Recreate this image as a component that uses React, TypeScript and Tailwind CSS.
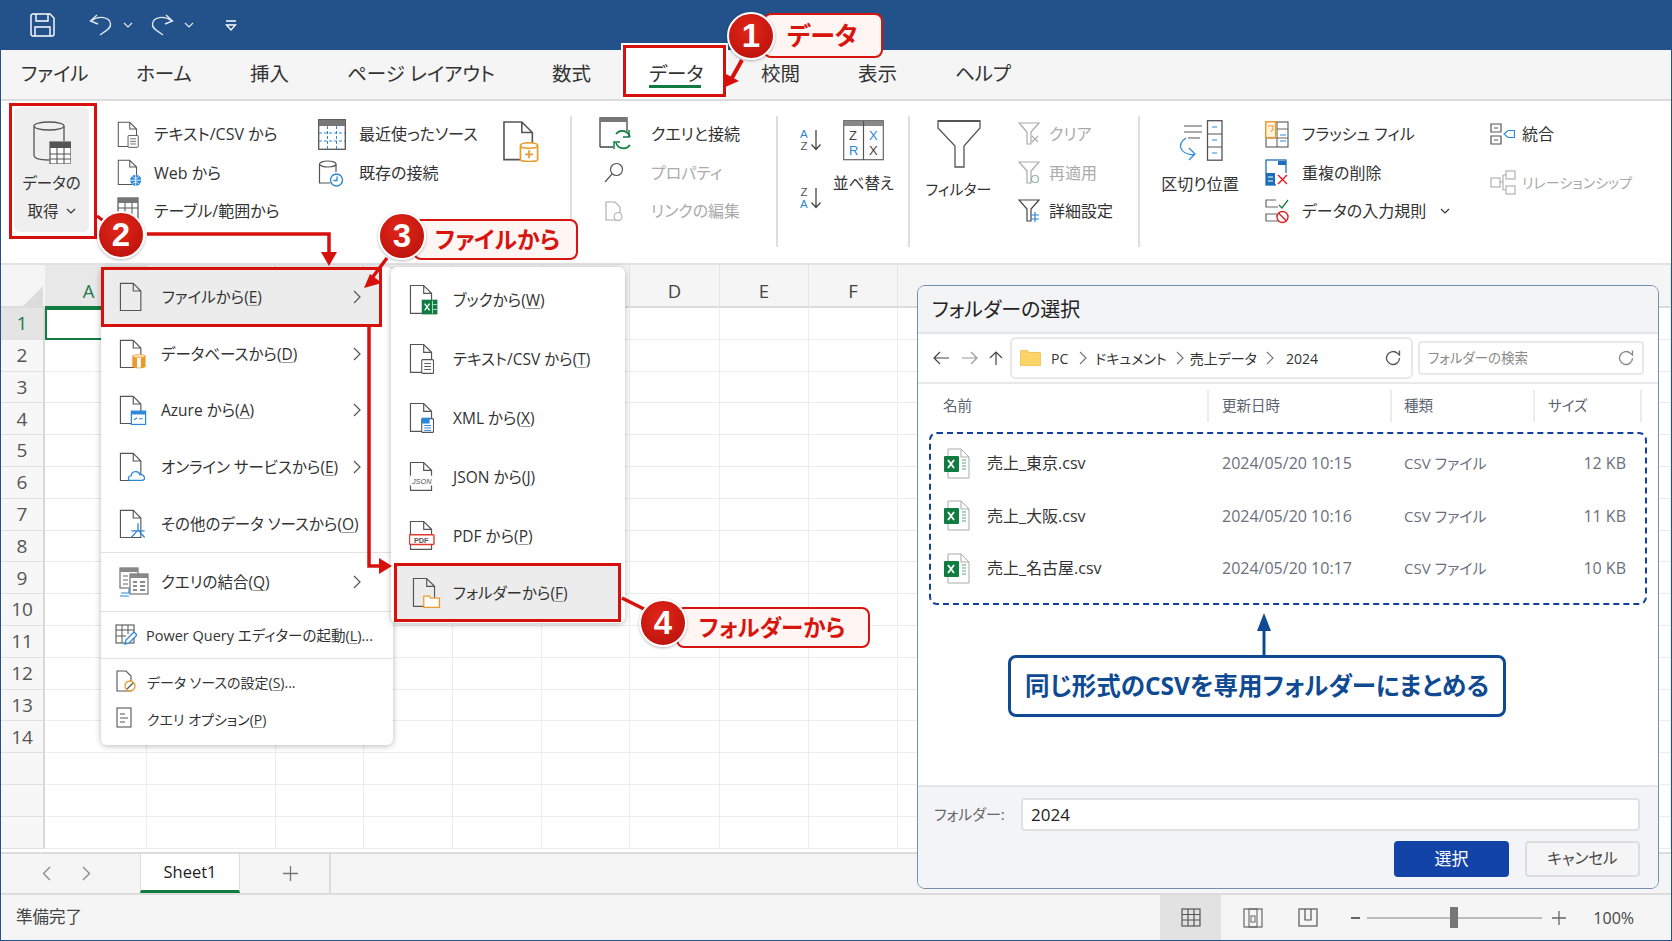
import React from "react";

const S = "#555";
const B = "#2b88d8";
const O = "#eb9b2d";
const G = "#107c41";

function Doc({ s = 1, c = S, children }: { s?: number; c?: string; children?: React.ReactNode }) {
  return (
    <svg width={30 * s} height={32 * s} viewBox="0 0 30 32" fill="none" className="shrink-0">
      <path d="M1.5 1.5H15L23 9.5V30H1.5Z M15 1.5V9.5H23" stroke={c} strokeWidth="1.2" fill="#fff" fillOpacity="0" />
      {children}
    </svg>
  );
}
const TextOv = ({ c = S }: { c?: string }) => (
  <g>
    <rect x="13" y="17" width="12" height="14" rx="1" fill="#fff" stroke={c} strokeWidth="1.1" />
    <path d="M15.5 21h7M15.5 24h7M15.5 27h7" stroke={c} strokeWidth="1" />
  </g>
);
const WebOv = () => (
  <g>
    <circle cx="22" cy="25" r="6.5" fill={B} />
    <path d="M15.5 25h13M22 18.5v13M18 20.5c3 3 5 3 8 0M18 29.5c3-3 5-3 8 0" stroke="#fff" strokeWidth="1" fill="none" />
  </g>
);
const DbOv = () => (
  <g>
    <path d="M14 19.5C14 16.5 27 16.5 27 19.5V30C27 32 14 32 14 30Z" fill="#fff" stroke={O} strokeWidth="1.3" />
    <path d="M14 19.5C14 22 27 22 27 19.5" stroke={O} strokeWidth="1.2" fill="none" />
    <path d="M20.5 23v6M17.5 26h6" stroke={O} strokeWidth="1.3" />
  </g>
);
const DbFill = () => (
  <g>
    <path d="M14 18C14 15.5 28 15.5 28 18V29C28 31.5 14 31.5 14 29Z" fill={O} />
    <rect x="19" y="20" width="4" height="10" fill="#fff" />
    <ellipse cx="21" cy="18" rx="6" ry="1.6" fill="#fbdca8" />
  </g>
);
const AzureOv = () => (
  <g>
    <rect x="13" y="17" width="15" height="14" fill="#fff" stroke={B} strokeWidth="1.3" />
    <rect x="13" y="17" width="15" height="3.5" fill={B} />
    <path d="M16 26l3-2M21 25h4" stroke={B} strokeWidth="1.2" />
  </g>
);
const CloudOv = () => (
  <path d="M12 30c-3 0-3-5 1-5 0-5 8-6 9-1 5-1 7 6 2 6Z" fill="#fff" stroke={B} strokeWidth="1.3" />
);
const OtherOv = () => <path d="M20 15v7M13 30l7-8 7 8M13 23h14" stroke={B} strokeWidth="1.4" fill="none" />;
const XlOv = () => (
  <g>
    <rect x="13" y="16" width="16" height="15" fill={G} />
    <path d="M16 20l5 7M21 20l-5 7" stroke="#fff" strokeWidth="1.4" />
    <path d="M24 17v13M24 21h5M24 26h5" stroke="#bfe3cf" strokeWidth="0.9" />
  </g>
);
const XmlOv = () => (
  <g>
    <rect x="13" y="17" width="12" height="14" rx="1" fill="#fff" stroke={S} strokeWidth="1.1" />
    <rect x="13" y="16" width="8" height="6" fill={B} />
    <path d="M15.5 24h7M15.5 26.5h7M15.5 29h7" stroke={B} strokeWidth="1" />
  </g>
);
const JsonOv = () => (
  <g>
    <rect x="1" y="15" width="24" height="10" fill="#fff" />
    <text x="3" y="23" fontSize="7.5" fill="#555" fontFamily="Liberation Sans, sans-serif" fontStyle="italic">JSON</text>
  </g>
);
const PdfOv = () => (
  <g>
    <rect x="0.5" y="15" width="25" height="10" rx="1" fill="#fff" stroke="#e03a30" strokeWidth="1.4" />
    <text x="5" y="23" fontSize="7.5" fill="#555" fontWeight="700" fontFamily="Liberation Sans, sans-serif">PDF</text>
  </g>
);
const FolderOv = () => (
  <path d="M12 19.5h6l1 2h9V31H12Z" fill="#fff" stroke={O} strokeWidth="1.3" />
);

function Chev({ className = "" }: { className?: string }) {
  return (
    <svg width="10" height="6" viewBox="0 0 10 6" fill="none" className={className}>
      <path d="M1 1l4 4 4-4" stroke="currentColor" strokeWidth="1.2" />
    </svg>
  );
}
function Right({ c = "#555" }: { c?: string }) {
  return (
    <svg width="8" height="14" viewBox="0 0 8 14" fill="none">
      <path d="M1 1l6 6-6 6" stroke={c} strokeWidth="1.2" />
    </svg>
  );
}
function Refresh({ c = "#555" }: { c?: string }) {
  return (
    <svg width="18" height="18" viewBox="0 0 18 18" fill="none">
      <path d="M15.5 9a6.5 6.5 0 1 1-2-4.7L15.5 6V1.5" stroke={c} strokeWidth="1.3" />
    </svg>
  );
}

function GetDataIcon() {
  return (
    <svg width="38" height="43" viewBox="0 0 38 43" fill="none">
      <path d="M1 5V34C1 38 8 39 16 39" stroke={S} strokeWidth="1.3" />
      <path d="M31 5V20" stroke={S} strokeWidth="1.3" />
      <ellipse cx="16" cy="5" rx="15" ry="4" stroke={S} strokeWidth="1.3" fill="#f0f0f0" />
      <rect x="17" y="21" width="21" height="22" fill="#fff" stroke={S} strokeWidth="1.2" />
      <rect x="17" y="21" width="21" height="6" fill={S} />
      <path d="M24 27v16M31 27v16M17 33h21M17 38h21" stroke={S} strokeWidth="1.1" />
    </svg>
  );
}
function SmallTable() {
  return (
    <svg width="26" height="28" viewBox="0 0 26 28" fill="none">
      <rect x="1" y="1" width="20" height="24" stroke={S} strokeWidth="1.2" />
      <rect x="1" y="1" width="20" height="5" fill="#777" />
      <path d="M1 11h20M8 6v19M15 6v19" stroke={S} strokeWidth="1" />
    </svg>
  );
}
function RecentIcon() {
  return (
    <svg width="28" height="31" viewBox="0 0 28 31" fill="none">
      <rect x="0.7" y="0.7" width="26.6" height="29.6" stroke={S} strokeWidth="1.3" fill="#fff" />
      <rect x="1" y="1" width="26" height="6" fill="#777" />
      <path d="M1 14h26M1 22h26" stroke={B} strokeWidth="1" strokeDasharray="3 2" />
      <path d="M9.5 7v23M18.5 7v23" stroke={B} strokeWidth="1" strokeDasharray="3 2" />
    </svg>
  );
}
function ExistingIcon() {
  return (
    <svg width="26" height="28" viewBox="0 0 26 28" fill="none">
      <path d="M1.5 5V24H12M18 5V13" stroke={S} strokeWidth="1.2" />
      <ellipse cx="9.75" cy="5" rx="8.25" ry="3" stroke={S} strokeWidth="1.2" />
      <circle cx="18.5" cy="21" r="6" fill="#fff" stroke={B} strokeWidth="1.4" />
      <path d="M19 17.5V21.5H15.5" stroke={B} strokeWidth="1.3" />
    </svg>
  );
}
function QueryIcon() {
  return (
    <svg width="34" height="34" viewBox="0 0 34 34" fill="none">
      <path d="M1 30V1H28V14M1 30H14" stroke="#444" strokeWidth="1.3" />
      <rect x="1" y="1" width="27" height="4" fill="#777" />
      <path d="M31 20a8 8 0 0 0-14-3M17 26a8 8 0 0 0 14 2" stroke={G} strokeWidth="1.7" />
      <path d="M30 13v7h-6M15 32v-7h6" stroke={G} strokeWidth="1.5" />
    </svg>
  );
}
function MagIcon() {
  return (
    <svg width="20" height="21" viewBox="0 0 20 21" fill="none">
      <circle cx="12.5" cy="7.5" r="6" stroke="#555" strokeWidth="1.2" />
      <path d="M8 12L1 20" stroke="#555" strokeWidth="1.2" />
    </svg>
  );
}
function LinkDocIcon() {
  return (
    <svg width="19" height="21" viewBox="0 0 19 21" fill="none">
      <path d="M1 1H10L15 6V19H1Z" stroke="#aaa" strokeWidth="1.1" />
      <circle cx="13" cy="15.5" r="4" fill="#fff" stroke="#aaa" strokeWidth="1" />
    </svg>
  );
}
function SortSm({ up }: { up: boolean }) {
  return (
    <svg width="22" height="24" viewBox="0 0 22 24" fill="none">
      <text x="0" y={up ? 10 : 22} fontSize="11.5" fill={B} fontFamily="Liberation Sans, sans-serif">A</text>
      <text x="0.5" y={up ? 22 : 10} fontSize="11.5" fill="#555" fontFamily="Liberation Sans, sans-serif">Z</text>
      <path d="M16 2V21M11.5 16.5L16 21.5L20.5 16.5" stroke="#444" strokeWidth="1.3" />
    </svg>
  );
}
function SortBig() {
  return (
    <svg width="41" height="41" viewBox="0 0 41 41" fill="none" className="block">
      <rect x="0.7" y="0.7" width="39.6" height="39" stroke="#666" strokeWidth="1.2" fill="#fff" />
      <rect x="1" y="1" width="39" height="5" fill="#888" />
      <path d="M20.5 1v39" stroke="#555" strokeWidth="1.2" />
      <text x="6" y="20" fontSize="13" fill="#444" fontFamily="Liberation Sans, sans-serif">Z</text>
      <text x="6" y="35" fontSize="13" fill={B} fontFamily="Liberation Sans, sans-serif">R</text>
      <text x="26" y="20" fontSize="13" fill={B} fontFamily="Liberation Sans, sans-serif">X</text>
      <text x="26" y="35" fontSize="13" fill="#444" fontFamily="Liberation Sans, sans-serif">X</text>
    </svg>
  );
}
function FilterBig() {
  return (
    <svg width="44" height="48" viewBox="0 0 44 48" fill="none" className="block">
      <path d="M1 1H43V8L27 26V47H18V26L1 8Z" stroke="#555" strokeWidth="1.3" />
      <path d="M1 1H43" stroke="#555" strokeWidth="2" />
    </svg>
  );
}
function FilterSm({ kind }: { kind: "clear" | "reapply" | "adv" }) {
  const c = kind === "adv" ? "#444" : "#aaa";
  return (
    <svg width="23" height="24" viewBox="0 0 23 24" fill="none">
      <path d="M1 1H21L13 10V22H9V10Z" stroke={c} strokeWidth="1.2" />
      {kind === "clear" && <path d="M14 14l6 6M20 14l-6 6" stroke="#aaa" strokeWidth="1.1" />}
      {kind === "reapply" && <circle cx="17" cy="18" r="3.5" stroke="#8bb8a0" strokeWidth="1.2" />}
      {kind === "adv" && <path d="M17 13v10M13 16h8M13 20h8" stroke={B} strokeWidth="1.2" />}
    </svg>
  );
}
function TextColIcon() {
  return (
    <svg width="45" height="41" viewBox="0 0 45 41" fill="none" className="block">
      <path d="M6 6h18M6 12h18M10 18h12" stroke="#555" strokeWidth="1.2" />
      <path d="M8 18c-9 6-7 16 8 17" stroke={B} strokeWidth="1.3" />
      <path d="M11 28l6 6-6 6" stroke={B} strokeWidth="1.3" />
      <rect x="29.5" y="0.7" width="14.5" height="39.5" stroke="#555" strokeWidth="1.3" fill="#fff" />
      <path d="M29.5 14h14.5M29.5 27h14.5" stroke="#555" strokeWidth="1.2" />
      <path d="M34 7h5M34 20h5M34 33h5" stroke={B} strokeWidth="1.2" />
    </svg>
  );
}
function FlashIcon() {
  return (
    <svg width="24" height="27" viewBox="0 0 24 27" fill="none">
      <rect x="1" y="1" width="22" height="25" stroke="#666" strokeWidth="1.2" />
      <path d="M12 1v25M12 8h11M1 17h22" stroke="#666" strokeWidth="1.1" />
      <path d="M15 14h6M15 20h6" stroke={B} strokeWidth="1.1" />
      <rect x="0.7" y="0.7" width="10" height="16" fill="#fff2dc" stroke={O} strokeWidth="1.5" />
      <path d="M3 5h5v3l-2 3" stroke={O} strokeWidth="1.1" />
    </svg>
  );
}
function DedupeIcon() {
  return (
    <svg width="24" height="27" viewBox="0 0 24 27" fill="none">
      <rect x="1" y="1" width="20" height="25" stroke="#1e6fb8" strokeWidth="1.3" fill="#fff" />
      <rect x="1" y="14" width="9" height="12" fill="#1e6fb8" />
      <rect x="13" y="2" width="8" height="4" fill="#1e6fb8" />
      <path d="M3 18h5M3 22h5" stroke="#fff" strokeWidth="1" />
      <rect x="11" y="14" width="13" height="13" fill="#fff" />
      <path d="M13 16l9 9M22 16l-9 9" stroke="#e81123" strokeWidth="1.4" />
    </svg>
  );
}
function ValidIcon() {
  return (
    <svg width="24" height="25" viewBox="0 0 24 25" fill="none">
      <path d="M13 8H1V1H11M13 22H1V15H12" stroke="#666" strokeWidth="1.2" />
      <path d="M14 6l3 3 6-8" stroke={G} strokeWidth="1.3" />
      <circle cx="17.5" cy="18" r="5.5" stroke="#e02020" strokeWidth="1.4" fill="#fff" />
      <path d="M13.5 14l8 8" stroke="#e02020" strokeWidth="1.4" />
    </svg>
  );
}
function ConsolIcon() {
  return (
    <svg width="25" height="22" viewBox="0 0 25 22" fill="none">
      <path d="M1 1h10v8H1zM1 13h10v8H1z" stroke="#555" strokeWidth="1.2" />
      <path d="M4 5h4M4 17h4" stroke="#555" strokeWidth="1" />
      <path d="M14 11l4-3.5h6.5v7H18Z" stroke={B} strokeWidth="1.2" />
    </svg>
  );
}
function RelIcon() {
  return (
    <svg width="26" height="25" viewBox="0 0 26 25" fill="none">
      <rect x="1" y="8" width="9" height="9" stroke="#aaa" strokeWidth="1.1" />
      <rect x="16" y="1" width="9" height="8" stroke="#aaa" strokeWidth="1.1" />
      <rect x="16" y="16" width="9" height="8" stroke="#aaa" strokeWidth="1.1" />
      <path d="M10 12h3M13 5v15M13 5h3M13 20h3" stroke="#aaa" strokeWidth="1.1" />
    </svg>
  );
}
function MergeIcon() {
  return (
    <svg width="30" height="30" viewBox="0 0 30 30" fill="none" className="shrink-0">
      <rect x="1" y="1" width="18" height="20" fill="#fff" stroke="#666" strokeWidth="1.1" />
      <rect x="1" y="1" width="18" height="4" fill="#888" />
      <path d="M4 9h5M4 13h5M4 17h5" stroke="#666" strokeWidth="1" />
      <rect x="11" y="7" width="18" height="20" fill="#fff" stroke="#666" strokeWidth="1.1" />
      <rect x="11" y="7" width="18" height="4" fill="#888" />
      <path d="M14 15h4M14 19h4M14 23h4M21 15h5M21 19h5M21 23h5" stroke="#666" strokeWidth="1.4" />
      <path d="M2 26h8v-4M1 29h9" stroke={B} strokeWidth="1.2" />
    </svg>
  );
}
function PqIcon() {
  return (
    <svg width="22" height="22" viewBox="0 0 22 22" fill="none" className="shrink-0">
      <rect x="1" y="1" width="18" height="18" stroke="#555" strokeWidth="1.1" />
      <path d="M1 6h18M1 12h10M7 1v18M13 1v9" stroke="#555" strokeWidth="1" />
      <path d="M10 20l1-4 8-8 3 3-8 8Z" fill="#fff" stroke={B} strokeWidth="1.3" />
    </svg>
  );
}
function SetIcon() {
  return (
    <svg width="22" height="24" viewBox="0 0 22 24" fill="none" className="shrink-0">
      <path d="M1 1H10L15 6V21H1Z" stroke="#555" strokeWidth="1.1" />
      <circle cx="14" cy="16" r="5" fill="#fff" stroke={O} strokeWidth="1.3" />
      <path d="M11 19l6-6" stroke="#555" strokeWidth="1.2" />
    </svg>
  );
}
function OptIcon() {
  return (
    <svg width="20" height="22" viewBox="0 0 20 22" fill="none" className="shrink-0">
      <rect x="1" y="1" width="14" height="19" stroke="#555" strokeWidth="1.1" />
      <path d="M4 7h5M4 11h8M4 15h5" stroke="#555" strokeWidth="1" />
    </svg>
  );
}
function XlFile() {
  return (
    <svg width="27" height="31" viewBox="0 0 27 31" fill="none" className="shrink-0">
      <path d="M5 1H18L26 9V30H5Z" fill="#fff" stroke="#aaa" strokeWidth="1" />
      <path d="M18 1V9H26" stroke="#aaa" strokeWidth="1" />
      <rect x="1" y="8" width="15" height="16" rx="1" fill={G} />
      <path d="M5 12l6 8M11 12l-6 8" stroke="#fff" strokeWidth="1.8" />
      <path d="M19 12h4M19 15h4M19 18h4M19 21h4" stroke="#5aa57c" strokeWidth="1.2" />
    </svg>
  );
}

function Row({ icon, iw, label, gray, extra, size = "text-[16px]" }: { icon: React.ReactNode; iw: string; label: string; gray?: boolean; extra?: React.ReactNode; size?: string }) {
  return (
    <div className={`flex items-center h-[38.5px] ${size} ${gray ? "text-[#aaa]" : "text-[#333]"}`}>
      <div className={`${iw} shrink-0 flex items-center`}>{icon}</div>
      <span className="whitespace-nowrap">{label}</span>
      {extra}
    </div>
  );
}
const Sep = ({ className = "" }: { className?: string }) => <div className={`w-[2px] h-[131px] mt-[15px] bg-[#dedede] shrink-0 ${className}`} />;

function MenuItem({ icon, label, k, tail, arrow, h = "h-[57px]", active, iw = "w-[42px]", pl = "pl-[18px]", size = "text-[15.5px]", extraCls = "", arrowCls = "mr-[32px]" }: {
  icon: React.ReactNode; label: string; k?: string; tail?: string; arrow?: boolean; h?: string; active?: boolean; iw?: string; pl?: string; size?: string; extraCls?: string; arrowCls?: string;
}) {
  return (
    <div className={`flex items-center ${h} ${pl} ${size} text-[#333] whitespace-nowrap shrink-0 ${active ? "bg-[#ececec] border-[3px] border-[#d8100c]" : ""} ${extraCls}`}>
      <div className={`${iw} shrink-0 flex items-center`}>{icon}</div>
      <span className="translate-y-[1px]">
        {label}
        {k && (
          <>
            (<u className="decoration-[#999] underline-offset-2">{k}</u>){tail}
          </>
        )}
      </span>
      {arrow && (
        <span className={`ml-auto ${arrowCls}`}>
          <Right />
        </span>
      )}
    </div>
  );
}

function Badge({ n, className }: { n: string; className: string }) {
  return (
    <div className={`absolute w-[48px] h-[48px] rounded-full border-2 border-white bg-[radial-gradient(circle_at_45%_35%,#e2261a,#b40f0a)] flex items-center justify-center text-white text-[33px] font-bold [font-family:'Liberation_Sans',sans-serif] shadow-[0_1px_3px_rgba(0,0,0,0.3)] ${className}`}>
      {n}
    </div>
  );
}
function Label({ text, className }: { text: string; className: string }) {
  return (
    <div className={`absolute rounded-lg border-2 border-[#d8140e] bg-[#fff5f2] text-[#d8140e] font-bold flex items-center whitespace-nowrap ${className}`}>
      {text}
    </div>
  );
}

const cols = ["", "A", "", "", "", "", "", "D", "E", "F", ""];
const rows = Array.from({ length: 17 }, (_, i) => i + 1);

export default function App() {
  return (
    <div className="relative w-[1672px] h-[941px] overflow-hidden flex flex-col bg-white text-[#333] border-x border-b border-[#23518a] [font-family:'Open_Sans','Noto_Sans_CJK_JP',sans-serif] [font-feature-settings:'palt']">
      {/* Title bar */}
      <div className="h-[50px] shrink-0 bg-[#23518a] flex items-center text-white">
        <svg width="25" height="24" viewBox="0 0 25 24" fill="none" className="ml-[29px]">
          <path d="M1 3a2 2 0 0 1 2-2H20L24 5V21a2 2 0 0 1-2 2H3a2 2 0 0 1-2-2Z" stroke="#fff" strokeWidth="1.4" />
          <path d="M6 1V8H18V1M5 23V14H20V23" stroke="#fff" strokeWidth="1.4" />
        </svg>
        <svg width="23" height="22" viewBox="0 0 23 22" fill="none" className="ml-[34px]">
          <path d="M8 1L1.5 7L9 10M2 7C10 1 21 3 21.5 10C22 15 16 17 11 21" stroke="#dfe8f3" strokeWidth="1.4" />
        </svg>
        <Chev className="ml-[11px] text-[#dfe8f3]" />
        <svg width="23" height="22" viewBox="0 0 23 22" fill="none" className="ml-[18px]">
          <path d="M15 1L21.5 7L14 10M21 7C13 1 2 3 1.5 10C1 15 7 17 12 21" stroke="#dfe8f3" strokeWidth="1.4" />
        </svg>
        <Chev className="ml-[10px] text-[#dfe8f3]" />
        <svg width="12" height="11" viewBox="0 0 12 11" fill="none" className="ml-[31px]">
          <path d="M1 1h10M1.5 5l4.5 5 4.5-5Z" stroke="#fff" strokeWidth="1.3" />
        </svg>
      </div>

      {/* Tabs */}
      <div className="h-[51px] shrink-0 bg-[#f5f5f5] border-b-2 border-[#dcdcdc] flex items-center pl-[20px] pb-[1px] text-[19.5px] text-[#333] relative">
        <span className="w-[115px]">ファイル</span>
        <span className="w-[114px]">ホーム</span>
        <span className="w-[97px]">挿入</span>
        <span className="w-[205px]">ページ レイアウト</span>
        <span className="w-[97px]">数式</span>
        <span className="w-[112px] relative">
          <span className="absolute left-[-26px] top-[-14px] w-[103px] h-[52px] bg-white border-[3px] border-[#d8100c] outline-2 outline-white" />
          <span className="relative">データ</span>
          <span className="absolute left-0 top-[26px] w-[52px] h-[3px] bg-[#107c41]" />
        </span>
        <span className="w-[97px]">校閲</span>
        <span className="w-[97px]">表示</span>
        <span>ヘルプ</span>
      </div>

      {/* Ribbon */}
      <div className="h-[164px] shrink-0 border-b-2 border-[#e2e2e2] bg-white flex pl-[13px]">
        <div className="w-[75px] h-[125px] mt-[6px] bg-[#efefef] rounded-md flex flex-col items-center pt-[14px] text-[15.5px] shrink-0">
          <GetDataIcon />
          <div className="mt-[12px] leading-none">データの</div>
          <div className="mt-[12px] leading-none flex items-center gap-[7px]">
            取得 <Chev />
          </div>
        </div>

        <div className="pt-[14px] ml-[28px] w-[201px] shrink-0">
          <Row iw="w-[37px]" label="テキスト/CSV から" icon={<Doc s={0.85}><TextOv /></Doc>} />
          <Row iw="w-[37px]" label="Web から" icon={<Doc s={0.85}><WebOv /></Doc>} />
          <Row iw="w-[37px]" label="テーブル/範囲から" icon={<SmallTable />} />
        </div>
        <div className="pt-[14px] w-[184px] shrink-0">
          <Row iw="w-[41px]" label="最近使ったソース" icon={<RecentIcon />} />
          <Row iw="w-[41px]" label="既存の接続" icon={<ExistingIcon />} />
        </div>
        <div className="pt-[19px] w-[68px] shrink-0">
          <Doc s={1.32}><DbOv /></Doc>
        </div>
        <Sep />

        <div className="pt-[14px] pl-[27px] w-[204px] shrink-0">
          <Row iw="w-[52px]" label="クエリと接続" icon={<QueryIcon />} />
          <Row iw="w-[52px]" gray label="プロパティ" icon={<span className="ml-[5px]"><MagIcon /></span>} />
          <Row iw="w-[52px]" gray label="リンクの編集" icon={<span className="ml-[6px]"><LinkDocIcon /></span>} />
        </div>
        <Sep />

        <div className="w-[52px] pl-[22px] pt-[27px] shrink-0 flex flex-col gap-[34px]">
          <SortSm up />
          <SortSm up={false} />
        </div>
        <div className="w-[67px] pt-[19px] shrink-0 flex flex-col items-center text-[15.5px]">
          <SortBig />
          <div className="mt-[11px] whitespace-nowrap">並べ替え</div>
        </div>
        <Sep className="ml-[11px]" />

        <div className="w-[97px] pt-[19px] shrink-0 flex flex-col items-center text-[15px]">
          <FilterBig />
          <div className="mt-[10px] whitespace-nowrap">フィルター</div>
        </div>
        <div className="pt-[14px] w-[131px] pl-[11px] shrink-0">
          <Row iw="w-[31px]" gray label="クリア" icon={<FilterSm kind="clear" />} />
          <Row iw="w-[31px]" gray label="再適用" icon={<FilterSm kind="reapply" />} />
          <Row iw="w-[31px]" label="詳細設定" icon={<FilterSm kind="adv" />} />
        </div>
        <Sep />

        <div className="w-[120px] pt-[19px] shrink-0 flex flex-col items-center text-[16px]">
          <TextColIcon />
          <div className="mt-[11px] whitespace-nowrap">区切り位置</div>
        </div>
        <div className="pt-[14px] w-[230px] shrink-0 pl-[5px]">
          <Row iw="w-[37px]" label="フラッシュ フィル" icon={<FlashIcon />} />
          <Row iw="w-[37px]" label="重複の削除" icon={<DedupeIcon />} />
          <Row iw="w-[37px]" label="データの入力規則" extra={<Chev className="ml-[14px]" />} icon={<ValidIcon />} />
        </div>
        <div className="pt-[14px] shrink-0">
          <Row iw="w-[32px]" label="統合" icon={<ConsolIcon />} />
          <div className="mt-[10px]">
            <Row iw="w-[32px]" gray size="text-[14px]" label="リレーションシップ" icon={<RelIcon />} />
          </div>
        </div>
      </div>

      {/* Grid */}
      <div className="flex-1 min-h-0 overflow-hidden grid grid-cols-[44px_102px_129px_88px_89px_89px_88px_90px_89px_89px_1fr] grid-rows-[43px_repeat(17,31.8px)]">
        {cols.map((c, i) => (
          <div
            key={i}
            className={`border-b-2 flex items-center justify-center text-[18.5px] pt-[10px] ${i === 1 ? "bg-[#e8e8e8] text-[#1f7a4c] border-b-[#107c41] pr-[14px]" : "bg-[#f5f5f5] text-[#444] border-b-[#dcdcdc]"} ${i > 0 ? "border-r border-r-[#e3e3e3]" : ""}`}
          >
            {i === 0 ? (
              <svg width="20" height="20" viewBox="0 0 20 20" className="ml-auto mr-[2px] mt-auto">
                <path d="M0 20L20 0V20Z" fill="#dcdcdc" />
              </svg>
            ) : (
              c
            )}
          </div>
        ))}
        {rows.map((r) =>
          cols.map((_, i) =>
            i === 0 ? (
              <div key={`${r}-0`} className={`border-b border-r-2 border-b-[#e0e0e0] border-r-[#d8d8d8] flex items-center justify-center text-[19px] ${r === 1 ? "bg-[#e4e4e4] text-[#1f7a4c]" : "bg-[#f7f7f7] text-[#555]"}`}>
                {r <= 14 ? r : ""}
              </div>
            ) : r === 1 && i === 1 ? (
              <div key={`${r}-${i}`} className="border-2 border-[#107c41]" />
            ) : (
              <div key={`${r}-${i}`} className="border-b border-r border-[#ececec]" />
            )
          )
        )}
      </div>

      {/* Sheet bar */}
      <div className="h-[41px] shrink-0 bg-[#f5f5f5] border-t-2 border-[#dcdcdc] flex items-stretch">
        <div className="w-[139px] flex items-center pl-[41px] gap-[31px]">
          <svg width="9" height="15" viewBox="0 0 9 15" fill="none"><path d="M8 1L1.5 7.5L8 14" stroke="#888" strokeWidth="1.3" /></svg>
          <svg width="9" height="15" viewBox="0 0 9 15" fill="none"><path d="M1 1l6.5 6.5L1 14" stroke="#888" strokeWidth="1.3" /></svg>
        </div>
        <div className="w-[100px] bg-white border-x border-[#dcdcdc] border-b-[3px] border-b-[#107c41] flex items-center justify-center text-[16.5px] text-[#222]">Sheet1</div>
        <div className="w-[91px] border-r-2 border-[#dcdcdc] flex items-center justify-center pl-[12px]">
          <svg width="15" height="15" viewBox="0 0 15 15" fill="none"><path d="M7.5 0v15M0 7.5h15" stroke="#777" strokeWidth="1.3" /></svg>
        </div>
      </div>

      {/* Status bar */}
      <div className="h-[47px] shrink-0 bg-[#f5f5f5] border-t-2 border-[#dcdcdc] flex items-center text-[16.5px] text-[#444] pl-[15px]">
        <span>準備完了</span>
        <div className="ml-auto flex items-center h-full">
          <div className="w-[61px] h-full bg-[#e2e2e2] flex items-center justify-center">
            <svg width="20" height="19" viewBox="0 0 20 19" fill="none">
              <rect x="1" y="1" width="18" height="17" stroke="#555" strokeWidth="1.2" />
              <path d="M7 1v17M13 1v17M1 6.5h18M1 12h18" stroke="#555" strokeWidth="1.2" />
            </svg>
          </div>
          <svg width="20" height="20" viewBox="0 0 20 20" fill="none" className="ml-[22px]">
            <rect x="1" y="1" width="18" height="18" stroke="#666" strokeWidth="1.2" />
            <rect x="6" y="1" width="8" height="18" stroke="#666" strokeWidth="1.1" />
            <rect x="8" y="8" width="4" height="6" stroke="#666" strokeWidth="1" />
          </svg>
          <svg width="20" height="19" viewBox="0 0 20 19" fill="none" className="ml-[35px]">
            <rect x="1" y="1" width="18" height="17" stroke="#555" strokeWidth="1.2" />
            <path d="M7 1V12H13V1" stroke="#555" strokeWidth="1.2" />
          </svg>
          <div className="ml-[33px] w-[9px] h-[2px] bg-[#666]" />
          <div className="ml-[7px] w-[175px] h-[2px] bg-[#bbb] relative">
            <div className="absolute left-[83px] top-[-10px] w-[8px] h-[21px] bg-[#777]" />
          </div>
          <svg width="14" height="14" viewBox="0 0 14 14" fill="none" className="ml-[10px]"><path d="M7 0v14M0 7h14" stroke="#666" strokeWidth="1.3" /></svg>
          <span className="ml-[27px] mr-[37px] text-[16px]">100%</span>
        </div>
      </div>

      {/* Menu 1 */}
      <div className="absolute left-[100px] top-[267px] w-[292px] h-[478px] bg-white rounded-md shadow-[0_1px_6px_rgba(0,0,0,0.28)] flex flex-col">
        <MenuItem active h="h-[60px] w-[281px]" pl="pl-[15px]" iw="w-[43px]" icon={<Doc s={0.95} />} label="ファイルから" k="E" arrow arrowCls="mr-[18px]" />
        <MenuItem icon={<Doc s={0.95}><DbFill /></Doc>} label="データベースから" k="D" arrow h="h-[54px]" />
        <MenuItem icon={<Doc s={0.95}><AzureOv /></Doc>} label="Azure から" k="A" arrow h="h-[58px]" />
        <MenuItem icon={<Doc s={0.95}><CloudOv /></Doc>} label="オンライン サービスから" k="E" arrow h="h-[56px]" />
        <MenuItem icon={<Doc s={0.95}><OtherOv /></Doc>} label="その他のデータ ソースから" k="O" h="h-[58px]" />
        <div className="h-px bg-[#e2e2e2] mt-[-1px]" />
        <MenuItem icon={<MergeIcon />} label="クエリの結合" k="Q" arrow h="h-[58px]" />
        <div className="h-px bg-[#e2e2e2]" />
        <MenuItem icon={<PqIcon />} iw="w-[31px]" pl="pl-[14px]" label="Power Query エディターの起動" k="L" tail="..." h="h-[46px]" size="text-[14.5px]" />
        <div className="h-px bg-[#e2e2e2]" />
        <MenuItem icon={<SetIcon />} iw="w-[31px]" pl="pl-[15px]" label="データ ソースの設定" k="S" tail="..." h="h-[43px]" size="text-[14px]" extraCls="mt-[1px]" />
        <MenuItem icon={<OptIcon />} iw="w-[31px]" pl="pl-[15px]" label="クエリ オプション" k="P" h="h-[28px]" size="text-[14px]" extraCls="mt-[1px]" />
      </div>

      {/* Menu 2 */}
      <div className="absolute left-[390px] top-[267px] w-[234px] h-[356px] bg-white rounded-md shadow-[0_1px_6px_rgba(0,0,0,0.28)] flex flex-col pt-[3px]">
        <MenuItem icon={<Doc s={0.98}><XlOv /></Doc>} iw="w-[44px]" label="ブックから" k="W" h="h-[59px]" />
        <MenuItem icon={<Doc s={0.98}><TextOv /></Doc>} iw="w-[44px]" label="テキスト/CSV から" k="T" h="h-[59px]" />
        <MenuItem icon={<Doc s={0.98}><XmlOv /></Doc>} iw="w-[44px]" label="XML から" k="X" h="h-[59px]" />
        <MenuItem icon={<Doc s={0.98}><JsonOv /></Doc>} iw="w-[44px]" label="JSON から" k="J" h="h-[59px]" />
        <MenuItem icon={<Doc s={0.98}><PdfOv /></Doc>} iw="w-[44px]" label="PDF から" k="P" h="h-[59px]" />
        <MenuItem active icon={<Doc s={0.98}><FolderOv /></Doc>} iw="w-[41px]" label="フォルダーから" k="F" pl="pl-[15px]" h="h-[59px] w-[227px] ml-[3px]" extraCls="-mt-[2px]" />
      </div>

      {/* Dialog */}
      <div className="absolute left-[916px] top-[285px] w-[742px] h-[604px] bg-white rounded-lg border border-[#7390ae] overflow-hidden flex flex-col">
        <div className="h-[48px] shrink-0 bg-[#f3f4f6] border-b-2 border-[#e4e6ea] flex items-center pl-[14px] pt-[2px] text-[20px] text-[#222]">フォルダーの選択</div>
        <div className="h-[50px] shrink-0 border-b-2 border-[#e8e8e8] flex items-center pl-[15px] relative">
          <svg width="17" height="14" viewBox="0 0 17 14" fill="none"><path d="M16 7H1M7 1L1 7l6 6" stroke="#444" strokeWidth="1.2" /></svg>
          <svg width="17" height="14" viewBox="0 0 17 14" fill="none" className="ml-[11px]"><path d="M1 7h15M10 1l6 6-6 6" stroke="#999" strokeWidth="1.2" /></svg>
          <svg width="14" height="14" viewBox="0 0 14 14" fill="none" className="ml-[11px]"><path d="M7 14V1M1 7l6-6 6 6" stroke="#444" strokeWidth="1.2" /></svg>
          <div className="ml-[7px] w-[403px] h-[42px] bg-white border-2 border-[#e8e8e8] rounded-md flex items-center pl-[8px] text-[14px] text-[#333]">
            <svg width="21" height="16" viewBox="0 0 21 16" className="shrink-0"><path d="M0 1.5A1.5 1.5 0 0 1 1.5 0H7l2 2.5h10.5A1.5 1.5 0 0 1 21 4v10.5a1.5 1.5 0 0 1-1.5 1.5h-18A1.5 1.5 0 0 1 0 14.5Z" fill="#fbd467" stroke="#eab54a" strokeWidth="0.7" /></svg>
            <span className="ml-[10px]">PC</span>
            <span className="ml-[11px]"><Right c="#777" /></span>
            <span className="ml-[8px]">ドキュメント</span>
            <span className="ml-[9px]"><Right c="#777" /></span>
            <span className="ml-[6px]">売上データ</span>
            <span className="ml-[9px]"><Right c="#777" /></span>
            <span className="ml-[12px]">2024</span>
            <span className="ml-auto mr-[9px]"><Refresh /></span>
          </div>
          <div className="ml-[5px] w-[226px] h-[34px] bg-white border-2 border-[#e8e8e8] rounded flex items-center pl-[8px] text-[13.5px] text-[#8a8a8a]">
            フォルダーの検索
            <span className="ml-auto mr-[7px]"><Refresh c="#888" /></span>
          </div>
        </div>
        <div className="h-[42px] shrink-0 flex items-center pt-[2px] text-[14.5px] text-[#5c6470]">
          <div className="w-[291px] h-[32px] pl-[25px] border-r-2 border-[#ececec] flex items-center">名前</div>
          <div className="w-[183px] h-[32px] pl-[13px] border-r-2 border-[#ececec] flex items-center">更新日時</div>
          <div className="w-[143px] h-[32px] pl-[12px] border-r-2 border-[#ececec] flex items-center">種類</div>
          <div className="w-[107px] h-[32px] pl-[13px] border-r-2 border-[#ececec] flex items-center">サイズ</div>
        </div>
        <div className="mx-[11px] mt-[6px] h-[173px] shrink-0 border-2 border-dashed border-[#1340a0] rounded-lg flex flex-col pt-[3px] pl-[12px] pr-[19px]">
          {[
            ["売上_東京.csv", "2024/05/20 10:15", "12 KB"],
            ["売上_大阪.csv", "2024/05/20 10:16", "11 KB"],
            ["売上_名古屋.csv", "2024/05/20 10:17", "10 KB"],
          ].map(([n, d, s]) => (
            <div key={n} className="h-[52.5px] flex items-center text-[16px] text-[#6a717c]">
              <XlFile />
              <span className="ml-[17px] w-[235px] text-[#333]">{n}</span>
              <span className="w-[182px]">{d}</span>
              <span className="text-[15px]">CSV ファイル</span>
              <span className="ml-auto">{s}</span>
            </div>
          ))}
        </div>
        <div className="flex-1 relative">
          <div className="absolute left-[90px] top-[50px] w-[498px] h-[62px] bg-white border-[3px] border-[#0f4a92] rounded-lg flex items-center justify-center text-[24.5px] font-bold text-[#0f4a92] whitespace-nowrap">
            同じ形式のCSVを専用フォルダーにまとめる
          </div>
        </div>
        <div className="h-[103px] shrink-0 bg-[#f3f4f7] border-t-2 border-[#e4e6ea] pl-[16px] pr-[18px] pt-[11px] flex flex-col">
          <div className="flex items-center">
            <span className="w-[87px] text-[15px] text-[#666]">フォルダー:</span>
            <div className="flex-1 h-[33px] bg-white border-2 border-[#dfe1e5] rounded flex items-center pl-[8px] text-[17px] text-[#222]">2024</div>
          </div>
          <div className="flex justify-end gap-[16px] mt-[10px]">
            <div className="w-[115px] h-[36px] bg-[#1244a8] rounded flex items-center justify-center text-white text-[17px]">選択</div>
            <div className="w-[115px] h-[36px] bg-[#f5f5f5] border-2 border-[#dcdde0] rounded flex items-center justify-center text-[15.5px] text-[#444]">キャンセル</div>
          </div>
        </div>
      </div>

      {/* Get-data highlight */}
      <div className="absolute left-[8px] top-[103px] w-[88px] h-[136px] border-[3px] border-[#d8100c] pointer-events-none" />

      {/* Annotations */}
      <svg className="absolute inset-0 pointer-events-none" width="1672" height="941" viewBox="0 0 1672 941" fill="none">
        <path d="M741 60L731 78" stroke="#d8100c" strokeWidth="4" />
        <polygon points="722,88 725,74 738,81" fill="#d8100c" />
        <path d="M96 216L108 225" stroke="#d8100c" strokeWidth="3" />
        <path d="M146 234H328V254" stroke="#d8100c" strokeWidth="3.5" />
        <polygon points="320,252 336,252 328,266" fill="#d8100c" />
        <path d="M386 258L371 278" stroke="#d8100c" strokeWidth="3.5" />
        <polygon points="363,288 369,274 381,283" fill="#d8100c" />
        <path d="M368 327V566H380" stroke="#d8100c" strokeWidth="3.5" />
        <polygon points="378,558 378,574 391,566" fill="#d8100c" />
        <path d="M621 598L645 610" stroke="#d8100c" strokeWidth="3.5" />
        <path d="M1263 656V630" stroke="#0f4a92" strokeWidth="3" />
        <polygon points="1263,613 1256,631 1270,631" fill="#0f4a92" />
      </svg>

      <Label text="データ" className="left-[762px] top-[13px] w-[120px] h-[45px] pl-[22px] text-[25px]" />
      <Badge n="1" className="left-[726px] top-[12px]" />
      <Badge n="2" className="left-[96px] top-[211px]" />
      <Label text="ファイルから" className="left-[412px] top-[219px] w-[165px] h-[41px] pl-[20px] text-[23px]" />
      <Badge n="3" className="left-[377px] top-[212px]" />
      <Label text="フォルダーから" className="left-[675px] top-[607px] w-[194px] h-[41px] pl-[21px] text-[22.5px]" />
      <Badge n="4" className="left-[638px] top-[599px]" />
    </div>
  );
}
